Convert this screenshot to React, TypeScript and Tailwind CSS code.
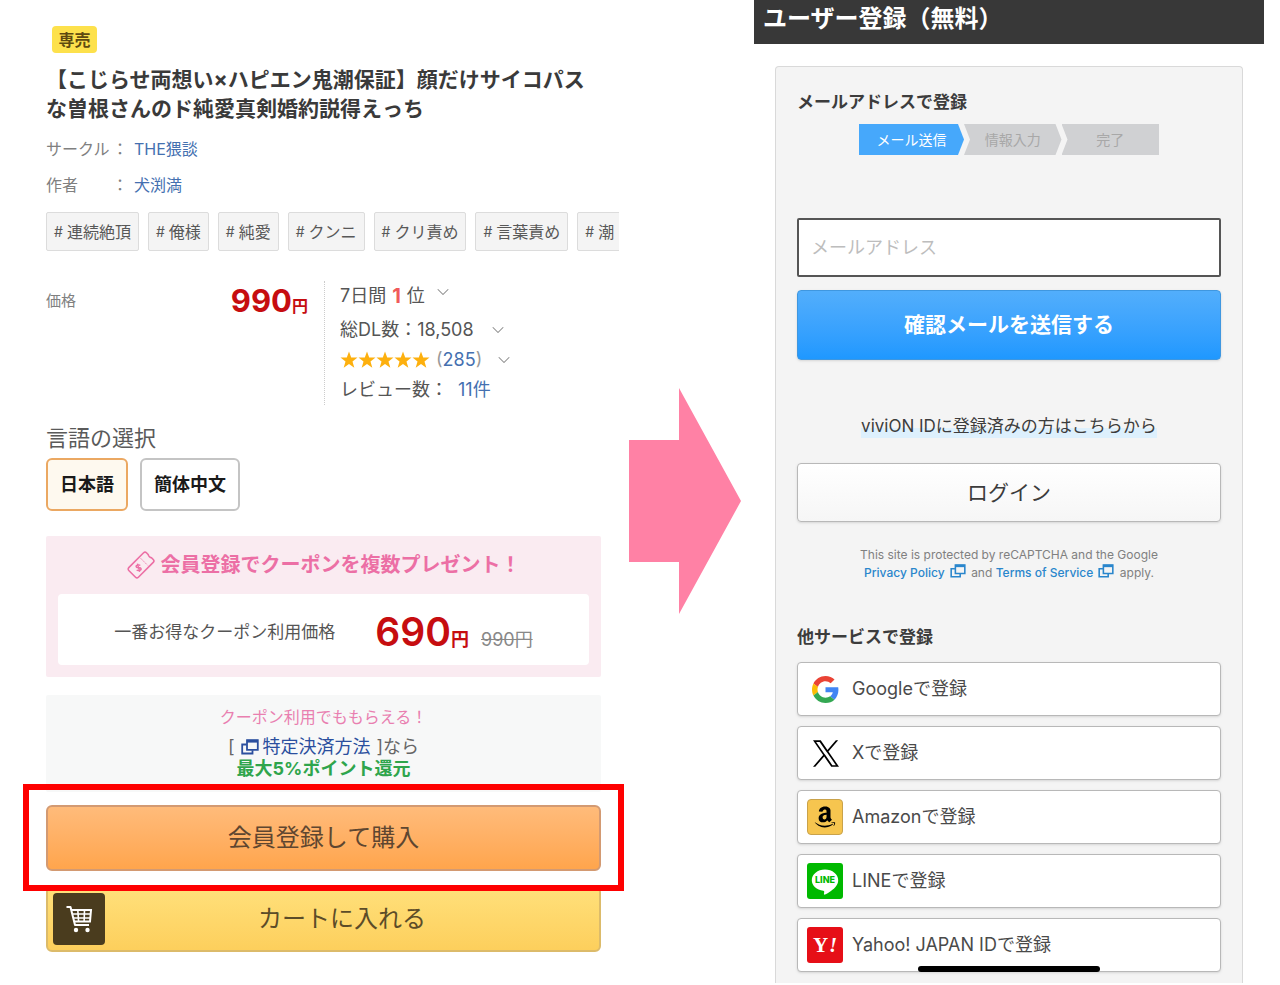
import React from "react";
import { ChevronDown } from "lucide-react";
import { FaAmazon } from "react-icons/fa";

const tags = ["連続絶頂", "俺様", "純愛", "クンニ", "クリ責め", "言葉責め", "潮"];

const WindowIcon = ({ className }: { className?: string }) => (
  <svg viewBox="0 0 18 16" fill="none" stroke="currentColor" strokeWidth="1.8" className={className} aria-hidden="true">
    <path d="M5.5 5.5H1.2v9h10.3v-3.3" />
    <path d="M6 1.2h10.8v9.6H6z" />
    <path d="M6 2.2h10.8" strokeWidth="2.8" />
  </svg>
);

const CouponIcon = () => (
  <svg viewBox="0 0 28 28" fill="none" stroke="#ec6fa5" strokeWidth="1.6" className="size-7" aria-hidden="true">
    <g transform="rotate(-45 14 14)">
      <path d="M3.5 7.2h21a2 2 0 0 1 2 2v2.6c-.8.4-.8 4 0 4.400v2.600a2 2 0 0 1-2 2h-21a2 2 0 0 1-2-2V9.200a2 2 0 0 1 2-2z" />
      <path d="M18.500 9v10" strokeWidth="0.8" strokeDasharray="2 1" />
    </g>
    <g transform="rotate(-15 11.500 16.500)">
      <path d="M13.700 15c-.4-.8-1.200-1.100-2.200-1.100-1.200 0-2.100.5-2.100 1.400 0 2.100 4.300.8 4.300 2.900 0 .9-.9 1.400-2.200 1.400-1.100 0-2-.4-2.300-1.200M11.500 12.500v8.500" strokeWidth="1.400" />
    </g>
  </svg>
);

const CartIcon = () => (
  <svg viewBox="0 0 28 30" fill="none" stroke="#fff" strokeWidth="2" className="h-[30px] w-7" aria-hidden="true">
    <path d="M1.500 3h4l4.500 18h14" strokeLinejoin="round" />
    <path d="M6.500 6h19.500l-1 11.500H9" />
    <path d="M7 10h18.500M8 14h17M12.800 6l.8 11.500M19.500 6l-.4 11.500" strokeWidth="1.600" />
    <circle cx="11" cy="26" r="2.200" fill="#fff" stroke="none" />
    <circle cx="22.500" cy="26" r="2.200" fill="#fff" stroke="none" />
  </svg>
);

const Stars = () => (
  <span className="flex" role="img" aria-label="5">
    {[1, 2, 3, 4, 5].map((n) => (
      <svg key={n} viewBox="0 0 18 18" fill="#fdb00e" className="size-[18px]" aria-hidden="true">
        <path d="M9 0.500l2.200 6h6.300l-5 3.900 1.800 6.400L9 13l-5.300 3.800 1.800-6.400-5-3.900h6.300z" />
      </svg>
    ))}
  </span>
);

const GoogleLogo = () => (
  <svg viewBox="0 0 48 48" className="size-[27px]" aria-hidden="true">
    <path fill="#EA4335" d="M24 9.5c3.54 0 6.71 1.22 9.21 3.6l6.85-6.85C35.9 2.38 30.47 0 24 0 14.62 0 6.51 5.38 2.56 13.22l7.98 6.19C12.43 13.72 17.74 9.5 24 9.5z" />
    <path fill="#4285F4" d="M46.98 24.55c0-1.57-.15-3.09-.38-4.55H24v9.02h12.94c-.58 2.96-2.26 5.48-4.78 7.18l7.73 6c4.51-4.18 7.09-10.36 7.09-17.65z" />
    <path fill="#FBBC05" d="M10.53 28.59c-.48-1.45-.76-2.99-.76-4.59s.27-3.14.76-4.59l-7.98-6.19C.92 16.46 0 20.12 0 24c0 3.88.92 7.54 2.56 10.78l7.97-6.19z" />
    <path fill="#34A853" d="M24 48c6.48 0 11.93-2.13 15.89-5.81l-7.73-6c-2.15 1.45-4.92 2.3-8.16 2.3-6.26 0-11.57-4.22-13.47-9.91l-7.98 6.19C6.51 42.62 14.62 48 24 48z" />
  </svg>
);

const XLogo = () => (
  <svg viewBox="0 0 1200 1227" className="ml-0.5 h-[27px] w-[26px]" aria-hidden="true">
    <path d="M714.163 519.284L1160.89 0H1055.03L667.137 450.887L357.328 0H0L468.492 681.821L0 1226.37H105.866L515.491 750.218L842.672 1226.37H1200L714.137 519.284H714.163ZM569.165 687.828L521.697 619.934L144.011 79.6944H306.615L611.412 515.685L658.88 583.579L1055.08 1150.3H892.476L569.165 687.854V687.828Z" />
  </svg>
);

const AmazonLogo = () => (
  <span className="flex size-9 items-center justify-center rounded-sm border border-[#c9a24a] bg-[#f6c54f]">
    <FaAmazon className="size-6 text-black" />
  </span>
);

const LineLogo = () => (
  <svg viewBox="0 0 36 36" className="size-9" aria-hidden="true">
    <rect width="36" height="36" rx="3" fill="#00b900" />
    <path d="M18 6.500c7.400 0 13.200 4.800 13.200 10.800 0 2.600-1.100 4.900-3.200 7.100-2.800 3-8.600 6.500-10 7.100-1.300.5-1.100-.4-1-.9l.2-1.600c0-.5 0-1-.9-1.200C9.600 26.900 4.800 22.600 4.800 17.300 4.800 11.300 10.600 6.500 18 6.500z" fill="#fff" />
    <text x="18" y="20" textAnchor="middle" fontSize="9" fontWeight="800" fill="#00b900" className="font-['Inter',sans-serif]">
      LINE
    </text>
  </svg>
);

const YahooLogo = () => (
  <svg viewBox="0 0 36 36" className="size-9" aria-hidden="true">
    <rect width="36" height="36" rx="3" fill="#e60f17" />
    <g fill="#fff" fontWeight="700" className="font-['Liberation_Serif',serif]">
      <text x="6" y="25" fontSize="21">Y</text>
      <text x="22" y="25" fontSize="21" fontStyle="italic">!</text>
    </g>
  </svg>
);

const providers = [
  { name: "Google", logo: <GoogleLogo /> },
  { name: "X", logo: <XLogo /> },
  { name: "Amazon", logo: <AmazonLogo /> },
  { name: "LINE", logo: <LineLogo /> },
  { name: "Yahoo! JAPAN ID", logo: <YahooLogo /> },
];

const Chevron = () => <ChevronDown className="size-5 text-[#888]" strokeWidth={1.25} />;

const ProductPanel = () => {
  return (
    <section className="min-w-0 pt-[26px] pr-7 pl-[46px]">
      <div className="ml-1.5 flex h-[27px] w-[45px] items-center justify-center rounded-sm bg-[#fde14c] text-base font-bold text-[#5e4a10]">
        専売
      </div>
      <h1 className="mt-3 text-[21px] leading-[29px] font-bold text-[#3a3a3a]">
        【こじらせ両想い×ハピエン鬼潮保証】顔だけサイコパス
        <br />
        な曽根さんのド純愛真剣婚約説得えっち
      </h1>

      <dl className="mt-3.5 grid grid-cols-[66px_22px_1fr] gap-y-3 text-base leading-6 text-[#808080]">
        <dt>サークル</dt>
        <dd>：</dd>
        <dd>
          <a href="#circle" className="text-[#4470b0]">THE猥談</a>
        </dd>
        <dt>作者</dt>
        <dd>：</dd>
        <dd>
          <a href="#author" className="text-[#4470b0]">犬渕満</a>
        </dd>
      </dl>

      <div className="mt-[15px] -mr-[18px] flex gap-[9px] overflow-hidden">
        {tags.map((tag) => (
          <a
            key={tag}
            href="#tag"
            className="flex h-[39px] shrink-0 items-center gap-1 rounded-xs border border-[#dcdcdc] bg-[#f4f4f4] px-[7px] text-base text-[#585858]"
          >
            <span className="text-sm">#</span>
            {tag}
          </a>
        ))}
      </div>

      <div className="mt-[30px] flex">
        <div className="flex w-[279px] items-start justify-between border-r border-dotted border-[#ccc] pr-4">
          <span className="text-[15px] leading-10 text-[#808080]">価格</span>
          <span className="text-[31px] leading-10 font-bold text-[#c60d10]">
            990<span className="text-base">円</span>
          </span>
        </div>
        <div className="pl-[15px] text-lg leading-[30px] text-[#555]">
          <div className="mb-1 flex items-center">
            7日間<span className="mx-1.5 text-xl leading-[30px] font-bold text-[#f05a5a]">1</span>位
            <span className="ml-2 pb-2"><Chevron /></span>
          </div>
          <div className="flex items-center">
            総DL数：18,508<span className="ml-3.5"><Chevron /></span>
          </div>
          <div className="flex items-center">
            <Stars />
            <span className="ml-1.5 text-[#999]">
              (<a href="#rating" className="text-[#4470b0]">285</a>)
            </span>
            <span className="ml-3"><Chevron /></span>
          </div>
          <div>
            レビュー数：<a href="#reviews" className="ml-2.5 text-[#4470b0]">11件</a>
          </div>
        </div>
      </div>

      <h2 className="mt-[18px] text-[22px] leading-[30px] text-[#5a5a5a]">言語の選択</h2>
      <div className="mt-[5px] flex gap-3 text-lg font-bold text-[#1a1a1a]">
        <button type="button" className="h-[53px] rounded-md border-2 border-[#eba862] bg-[#fef9ef] px-3">
          日本語
        </button>
        <button type="button" className="h-[53px] rounded-md border-2 border-[#c4c4c4] bg-white px-3">
          簡体中文
        </button>
      </div>

      <div className="mt-[25px] rounded-xs bg-[#faebf1] px-3 pb-3">
        <div className="flex h-[58px] items-center justify-center gap-1.5 text-xl font-bold whitespace-nowrap text-[#ec6fa5]">
          <CouponIcon />
          会員登録でクーポンを複数プレゼント！
        </div>
        <div className="flex h-[71px] items-center justify-center rounded-sm bg-white pt-1.5">
          <span className="text-[17px] text-[#555]">一番お得なクーポン利用価格</span>
          <span className="ml-10 flex items-baseline">
            <span className="text-[39px] font-semibold text-[#c60d10]">690</span>
            <span className="text-lg font-semibold text-[#c60d10]">円</span>
            <s className="ml-3 text-lg text-[#888]">990円</s>
          </span>
        </div>
      </div>

      <div className="mt-[18px] rounded-xs bg-[#f7f8f8] pt-2.5 pb-3 text-center text-lg leading-[22px] text-[#666]">
        <p className="mb-[7px] text-base leading-6 text-[#e97fb0]">クーポン利用でももらえる！</p>
        <p className="flex items-center justify-center">
          [
          <a href="#payment" className="mx-1.5 flex items-center gap-1 text-[#2b4f9e]">
            <WindowIcon className="h-4 w-[18px]" />
            特定決済方法
          </a>
          ]なら
        </p>
        <p className="font-bold text-[#2fa54c]">最大5%ポイント還元</p>
      </div>

      <div className="relative z-10 mt-[13px]">
        <button
          type="button"
          className="h-[66px] w-full rounded-md border-2 border-[#d39a72] bg-linear-to-b from-[#ffbb7a] to-[#ffa54c] text-2xl text-[#5e4630]"
        >
          会員登録して購入
        </button>
        {/* marker around the purchase button */}
        <div className="pointer-events-none absolute -inset-x-[23px] -top-[21px] -bottom-5 border-6 border-[#fe0000]" />
      </div>
      <button
        type="button"
        className="mt-[15px] flex h-[66px] w-full items-center rounded-md border-2 border-[#dcbb6a] bg-linear-to-b from-[#ffe07a] to-[#fdcf5c] pl-[5px] text-2xl text-[#5c4c28]"
      >
        <span className="flex h-[52px] w-[52px] items-center justify-center rounded-sm bg-[#4a3c1e]">
          <CartIcon />
        </span>
        <span className="flex-1 pr-5">カートに入れる</span>
      </button>
    </section>
  );
};

const RegisterPanel = () => {
  return (
    <section className="min-w-0 pr-4 pl-[13px]">
      <h1 className="h-11 bg-[#383838] pl-[9px] text-2xl leading-[38px] font-bold text-white">ユーザー登録（無料）</h1>

      <div className="relative mx-[21px] mt-[22px] rounded-t-sm border border-b-0 border-[#d9d9d9] bg-[#f4f4f4] px-[21px] pt-[23px] pb-[11px]">
        <h2 className="text-[17px] leading-6 font-bold text-[#3c3c3c]">メールアドレスで登録</h2>
        <ol className="mx-auto mt-2.5 flex h-[31px] w-[300px] text-center text-sm leading-[31px] text-[#a8a8a8]">
          <li className="w-[105px] bg-[#46a8fb] text-white [clip-path:polygon(0_0,calc(100%-6px)_0,100%_50%,calc(100%-6px)_100%,0_100%)]">
            メール送信
          </li>
          <li className="flex-1 bg-[#d0d1d3] [clip-path:polygon(0_0,calc(100%-6px)_0,100%_50%,calc(100%-6px)_100%,0_100%,6px_50%)]">
            情報入力
          </li>
          <li className="flex-1 bg-[#d0d1d3] [clip-path:polygon(0_0,100%_0,100%_100%,0_100%,6px_50%)]">完了</li>
        </ol>

        <form onSubmit={(e) => e.preventDefault()}>
          <input
            type="email"
            aria-label="メールアドレス"
            placeholder="メールアドレス"
            className="mt-[63px] block h-[59px] w-full rounded-xs border-2 border-[#555] bg-white px-3 text-lg placeholder:text-[#bdbdbd]"
          />
          <button
            type="submit"
            className="mt-[13px] block h-[70px] w-full rounded-sm border border-[#3f97e0] bg-linear-to-b from-[#52aefc] to-[#1e98ff] text-[21px] font-bold text-white shadow-sm"
          >
            確認メールを送信する
          </button>
        </form>

        <p className="mt-[54px] text-center text-[17px] leading-6 text-[#3c3c3c]">
          <a href="#login" className="inline-block bg-linear-to-b from-transparent from-60% to-[#ddf0fd] to-60%">
            viviON IDに登録済みの方はこちらから
          </a>
        </p>
        <button
          type="button"
          className="mt-[25px] block h-[59px] w-full rounded-sm border border-[#b8b8b8] bg-linear-to-b from-white to-[#f6f6f6] text-[21px] text-[#3c3c3c] shadow"
        >
          ログイン
        </button>

        <p className="mt-6 text-center text-xs leading-[18px] text-[#808080]">
          This site is protected by reCAPTCHA and the Google
          <br />
          <a href="#privacy" className="font-medium text-[#2a86cc]">
            Privacy Policy <WindowIcon className="mx-0.5 inline h-3.5 w-4 align-[-1px]" />
          </a>{" "}
          and{" "}
          <a href="#terms" className="font-medium text-[#2a86cc]">
            Terms of Service <WindowIcon className="mx-0.5 inline h-3.5 w-4 align-[-1px]" />
          </a>{" "}
          apply.
        </p>

        <h2 className="mt-[43px] text-[17px] leading-6 font-bold text-[#3c3c3c]">他サービスで登録</h2>
        <div className="mt-[13px] flex flex-col gap-2.5">
          {providers.map(({ name, logo }) => (
            <button
              key={name}
              type="button"
              className="flex h-[54px] items-center gap-[9px] rounded-sm border border-[#b8b8b8] bg-white pl-[9px] text-lg text-[#4a4a4a] shadow"
            >
              <span className="flex size-9 items-center justify-center">{logo}</span>
              {name}で登録
            </button>
          ))}
        </div>

        {/* home indicator */}
        <div className="absolute bottom-[11px] left-1/2 h-1.5 w-[182px] -translate-x-1/2 rounded-full bg-black" />
      </div>
    </section>
  );
};

const App = () => {
  return (
    <main
      lang="ja"
      className="grid grid-cols-[629fr_112fr_539fr] bg-white font-['Inter','Noto_Sans_CJK_JP',sans-serif]"
    >
      <ProductPanel />
      <div className="self-center pt-[18px]">
        <svg viewBox="0 0 112 226" fill="#ff81a5" className="w-full" aria-hidden="true">
          <path d="M0 52h50V0l62 113-62 113v-52H0z" />
        </svg>
      </div>
      <RegisterPanel />
    </main>
  );
};

export default App;
